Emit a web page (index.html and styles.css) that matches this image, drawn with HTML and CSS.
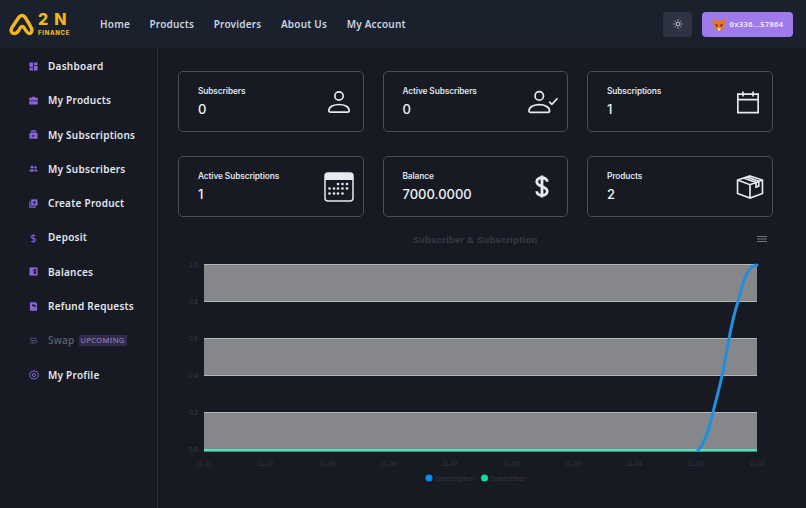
FILE: index.html
```html
<!DOCTYPE html>
<html lang="en">
<head>
<meta charset="utf-8">
<title>2N Finance Dashboard</title>
<link rel="stylesheet" href="styles.css">
</head>
<body>
<header class="topbar">
  <div class="brand">
    <svg class="brand-mark" viewBox="0 0 25 23" width="25" height="23"><path d="M13 2.500C11 2.500 10 4 9 5.500L3 14.500C1 17.500 2.500 20.500 5.500 20.500C8 20.500 9 18.500 10 17L11.500 14.500C12.500 13 14 13 15 14.500L16.500 17C17.500 18.500 18.500 20.500 20 20.500C22.500 20.500 23.500 18 22.500 15.500C21 12 19 9 17.500 6.500C16.500 4.500 15 2.500 13 2.500Z" fill="none" stroke="#f3b71b" stroke-width="3.400" stroke-linecap="round" stroke-linejoin="round"/></svg>
    <div class="brand-text"><span class="brand-name">2 N</span><span class="brand-sub">FINANCE</span></div>
  </div>
  <nav class="topnav">
    <a>Home</a><a>Products</a><a>Providers</a><a>About Us</a><a>My Account</a>
  </nav>
  <div class="actions">
    <button class="theme-btn" aria-label="Theme">
      <svg viewBox="0 0 12 12" width="10" height="10" fill="none" stroke="#e2e8f0" stroke-width="1"><circle cx="6" cy="6" r="2.300"/><path d="M6 .5V2M6 10v1.500M.5 6H2M10 6h1.500M2.100 2.100l1.100 1.100M8.800 8.800l1.100 1.100M2.100 9.900l1.100-1.100M8.800 3.200l1.100-1.100"/></svg>
    </button>
    <button class="wallet-btn">
      <svg viewBox="0 0 14 13" width="14" height="13"><path d="M0.500 0.500 L5 2.500 H9 L13.500 0.500 L13 6 L11 11 L8.500 12.500 H5.500 L3 11 L1 6Z" fill="#e2762b"/><path d="M3 6 L6 7 L5 9 Z M11 6 L8 7 L9 9 Z" fill="#3a2a20"/><path d="M5.500 10 H8.500 L8 12.500 H6Z" fill="#f0d6bd"/></svg>
      <span>0x336...57864</span>
    </button>
  </div>
</header>
<div class="shell">
  <aside class="sidebar">
    <a class="side-item"><svg class="side-icon" viewBox="0 0 10 10"><path d="M.5.5h4v5h-4zM5.500.5h4v3h-4zM5.500 4.500h4v5h-4zM.5 6.500h4v3h-4z"/></svg><span>Dashboard</span></a>
    <a class="side-item"><svg class="side-icon" viewBox="0 0 10 10"><path d="M3 2V.8h4V2h2.200a.6.6 0 0 1 .6.6V5H.2V2.600A.6.6 0 0 1 .8 2zM.2 5.800h9.600v3a.6.6 0 0 1-.6.6H.8a.6.6 0 0 1-.6-.6z"/></svg><span>My Products</span></a>
    <a class="side-item"><svg class="side-icon" viewBox="0 0 10 10"><path d="M2.500.3h5v1h-5zM1.500 1.800h7v1h-7zM.5 3.400h9v6.200h-9z"/><path d="M4 5v3l2.500-1.500z" fill="#171923"/></svg><span>My Subscriptions</span></a>
    <a class="side-item"><svg class="side-icon" viewBox="0 0 10 10"><circle cx="3.400" cy="3.500" r="1.600"/><circle cx="7.200" cy="3.800" r="1.300"/><path d="M.4 8.200c0-3 6-3 6 0zM7 8.200c0-1.200-.3-1.900-.8-2.400 1.600-.4 3.400.4 3.400 2.400z"/></svg><span>My Subscribers</span></a>
    <a class="side-item"><svg class="side-icon" viewBox="0 0 10 10"><path d="M2.400.4h7v7h-7z"/><path d="M.4 2.400h1.200v6h6v1.200H.4z"/><path d="M5.400 2h1v1.500h1.500v1H6.400v1.500h-1V4.500H3.900v-1h1.500z" fill="#171923"/></svg><span>Create Product</span></a>
    <a class="side-item"><span class="side-dollar">$</span><span>Deposit</span></a>
    <a class="side-item"><svg class="side-icon" viewBox="0 0 10 10"><path d="M.5.5h9v9h-9z"/><path d="M5 2.500h3v5H5zM6.200 4.200v1.600h.8V4.200z" fill="#171923"/></svg><span>Balances</span></a>
    <a class="side-item"><svg class="side-icon" viewBox="0 0 10 10"><path d="M1 .4h6.500L9 2v7.600H1z"/><path d="M3 3.500 5 2v1h1.500c1.500 0 1.500 3.500-.5 3.500 .8-.8.8-2-.5-2H5v1z" fill="#171923"/></svg><span>Refund Requests</span></a>
    <a class="side-item is-muted"><svg class="side-icon stroke" viewBox="0 0 10 10"><path d="M1 2.500h7.500M1 5h6.500a1.300 1.300 0 0 1 0 2.600H3M4 6.500 2.800 7.600 4 8.700M1 7.600h.8"/></svg><span>Swap</span><span class="tag">UPCOMING</span></a>
    <a class="side-item"><svg class="side-icon stroke gear" viewBox="0 0 10 10"><circle cx="5" cy="5" r="1.600"/><path d="M5 .6l1.100.8 1.400-.1.6 1.300 1.200.7-.3 1.700.3 1.700-1.200.7-.6 1.300-1.400-.1L5 9.400l-1.100-.8-1.400.1-.6-1.300-1.200-.7.3-1.700-.3-1.700 1.200-.7.6-1.300 1.400.1z"/></svg><span>My Profile</span></a>
  </aside>
  <main class="content">
    <section class="cards">
      <article class="card">
        <div><div class="card-label">Subscribers</div><div class="card-value">0</div></div>
        <svg class="card-icon" viewBox="0 0 26 26"><circle cx="13" cy="6.500" r="4.500"/><path d="M2 22.500c0-9 22-9 22 0 0 1-1 1.500-2 1.500H4c-1 0-2-.5-2-1.500z"/></svg>
      </article>
      <article class="card">
        <div><div class="card-label">Active Subscribers</div><div class="card-value">0</div></div>
        <svg class="card-icon wide" viewBox="0 0 32 26"><circle cx="12" cy="6.500" r="4.500"/><path d="M1 22.500c0-9 22-9 22 0 0 1-1 1.500-2 1.500H3c-1 0-2-.5-2-1.500z"/><path d="M22.500 12.500l3 3 6-6.500"/></svg>
      </article>
      <article class="card">
        <div><div class="card-label">Subscriptions</div><div class="card-value">1</div></div>
        <svg class="card-icon" viewBox="0 0 26 26"><path d="M2 4.500h22v20H2zM2 10.500h22M7.500 1.500v5.500M18.500 1.500v5.500"/></svg>
      </article>
      <article class="card">
        <div><div class="card-label">Active Subscriptions</div><div class="card-value">1</div></div>
        <svg class="card-icon large" viewBox="0 0 30 30"><rect x="1" y="1" width="28" height="28" rx="3"/><path class="fill" d="M1 4a3 3 0 0 1 3-3h22a3 3 0 0 1 3 3v4H1z"/><g class="fill"><circle cx="14" cy="12" r="1.300"/><circle cx="18.500" cy="12" r="1.300"/><circle cx="23" cy="12" r="1.300"/><circle cx="5.500" cy="16.500" r="1.300"/><circle cx="10" cy="16.500" r="1.300"/><circle cx="14" cy="16.500" r="1.300"/><circle cx="18.500" cy="16.500" r="1.300"/><circle cx="23" cy="16.500" r="1.300"/><circle cx="5.500" cy="21.500" r="1.300"/><circle cx="10" cy="21.500" r="1.300"/><circle cx="14" cy="21.500" r="1.300"/><circle cx="18.500" cy="21.500" r="1.300"/></g></svg>
      </article>
      <article class="card">
        <div><div class="card-label">Balance</div><div class="card-value">7000.0000</div></div>
        <svg class="card-icon dollar" viewBox="0 0 16 26"><path d="M14 7.500c0-6-12-6-12 0 0 6.500 12 4.500 12 11 0 6-12 6-12 0M8 .5v25"/></svg>
      </article>
      <article class="card">
        <div><div class="card-label">Products</div><div class="card-value">2</div></div>
        <svg class="card-icon box" viewBox="0 0 30 26"><path d="M15 1 L28.500 5.500V20L15 25 1.500 20V5.500zM1.500 5.500 15 10.500 28.500 5.500M15 10.500V25M8 3.200 21.500 8v5l3-1V6.800L11.500 2"/></svg>
      </article>
    </section>
    <section class="chart">
      <svg class="chart-svg" viewBox="0 0 595 270" width="595" height="270">
        <text class="chart-title" x="297" y="21.500" text-anchor="middle">Subscriber &amp; Subscription</text>
        <path class="menu" d="M579 15.500h10M579 18h10M579 20.500h10"/>
        <g class="bands">
          <rect x="26" y="43.500" width="553" height="37"/>
          <rect x="26" y="117.500" width="553" height="37"/>
          <rect x="26" y="191.500" width="553" height="37"/>
        </g>
        <g class="ylabels">
          <text x="20" y="46">1.0</text><text x="20" y="83">0.8</text><text x="20" y="120">0.6</text><text x="20" y="157">0.4</text><text x="20" y="194">0.2</text><text x="20" y="231">0.0</text>
        </g>
        <g class="xlabels">
          <text x="26" y="245">11-11</text><text x="87.400" y="245">11-10</text><text x="148.900" y="245">11-09</text><text x="210.300" y="245">11-08</text><text x="271.800" y="245">11-07</text><text x="333.200" y="245">11-06</text><text x="394.700" y="245">11-05</text><text x="456.100" y="245">11-04</text><text x="517.600" y="245">11-03</text><text x="579" y="245">11-02</text>
        </g>
        <path class="line-green" d="M26 229.500H579"/>
        <path class="line-green-core" d="M26 229H579"/>
        <path class="line-blue" d="M520 229C528 222 532 203 535 191.500C539 175 542 165 544 154.500C547 140 549 128 551 117.500C554 102 557 90 560 80.500C565 60 570 44 579 44"/>
        <circle cx="251" cy="257" r="3.500" fill="#008ffb"/><text class="legend" x="257" y="260">Subscription</text>
        <circle cx="306.500" cy="257" r="3.500" fill="#00e396"/><text class="legend" x="312.500" y="260">Subscriber</text>
      </svg>
    </section>
  </main>
</div>
</body>
</html>
```

FILE: styles.css
```css
* { box-sizing: border-box; }
html, body { margin: 0; padding: 0; height: 100%; }
body {
  width: 806px; height: 508px; overflow: hidden;
  background: #171923; color: #e2e8f0;
  font-family: "Noto Sans", "Open Sans", sans-serif;
  display: flex; flex-direction: column;
}
.topbar {
  height: 48px; flex: none; background: #1a202c;
  display: flex; align-items: center; padding: 0 13px 0 9px;
}
.brand { display: flex; align-items: center; gap: 4px; width: 91px; }
.brand-mark { flex: none; margin-top: 1px; }
.brand-text { display: flex; flex-direction: column; margin-bottom: 3px; color: #f3b71b; font-family: "Inter", sans-serif; font-weight: 800; }
.brand-name { font-size: 16px; line-height: 20px; letter-spacing: 1.300px; }
.brand-sub { font-size: 6px; line-height: 8px; letter-spacing: .7px; }
.topnav { display: flex; gap: 19.500px; flex: 1; font-size: 10px; font-weight: 600; letter-spacing: .2px; color: #cbd5e0; }
.actions { display: flex; align-items: center; gap: 10px; }
button { border: 0; padding: 0; font: inherit; }
.theme-btn {
  width: 29px; height: 25px; border-radius: 4px; background: #2d3340;
  display: flex; align-items: center; justify-content: center;
}
.wallet-btn {
  width: 91px; height: 25px; border-radius: 4px; background: #9f7aea; color: #e9e4fa;
  display: flex; align-items: center; justify-content: center; gap: 4px;
  font-size: 7.500px; font-weight: 700; letter-spacing: .35px;
}
.shell { flex: 1; display: flex; min-height: 0; }
.sidebar {
  width: 158px; flex: none; border-right: 1px solid #2a2e39;
  padding: 6px 0 0 29px; display: flex; flex-direction: column; gap: 10.300px;
}
.side-item {
  height: 24px; display: flex; align-items: center; gap: 10px;
  font-size: 10px; font-weight: 600; letter-spacing: .25px; color: #e2e8f0;
}
.side-icon { width: 9px; height: 9px; flex: none; fill: #8b66d8; }
.side-icon.stroke { fill: none; stroke: #8b66d8; stroke-width: 1; }
.side-icon.gear { width: 10px; height: 10px; margin-right: -1px; }
.side-dollar { width: 9px; text-align: center; color: #8b66d8; font-size: 11px; font-weight: 400; letter-spacing: 0; }
.is-muted { color: #5f6473; font-weight: 500; }
.is-muted .side-icon.stroke { stroke: #5c4f86; }
.tag {
  margin-left: -6px; padding: 0 2px; background: #322a4a; color: #9d8fc8;
  font-size: 7.500px; font-weight: 400; line-height: 11px; letter-spacing: .4px; border-radius: 1px;
}
.content { flex: 1; padding: 23px 33px 0 20px; min-width: 0; }
.cards { display: grid; grid-template-columns: repeat(3, 185.500px); gap: 24px 19px; }
.card {
  height: 61px; border: 1px solid #4a4e59; border-radius: 5px;
  padding: 0 9px 0 19px; display: flex; align-items: center; justify-content: space-between;
  background: #171923; font-family: "Inter", sans-serif;
}
.card-label { font-size: 8.300px; font-weight: 600; line-height: 12px; color: #dfe3ea; letter-spacing: -.1px; }
.card-value { font-size: 13px; font-weight: 500; line-height: 20px; color: #f0f2f5; margin-top: 2px; }
.card-icon { width: 24px; height: 24px; margin-right: 3px; fill: none; stroke: #e8eaee; stroke-width: 1.800; flex: none; }
.card-icon.wide { width: 30px; height: 26px; margin-right: 0; }
.card-icon.box { width: 28px; height: 24px; margin-right: -1px; }
.card-icon.large { width: 30px; height: 30px; margin-right: 0; stroke-width: 1.500; }
.card-icon.dollar { width: 14px; height: 27px; margin-right: 9px; stroke-width: 3.200; }
.card-icon .fill, .card-icon.large g { fill: #e8eaee; stroke: none; }
.chart { margin-top: 4px; }
.chart-svg { display: block; }
.chart-title { font-family: "Liberation Sans", sans-serif; font-size: 9.500px; font-weight: 700; fill: #373b46; letter-spacing: .2px; }
.menu { stroke: #70747e; stroke-width: 1; fill: none; }
.bands rect { fill: #86878b; stroke: #b4b5b8; stroke-width: 1; stroke-dasharray: 553 37; }
.ylabels text { font-family: "Liberation Sans", sans-serif; font-size: 6.500px; fill: #3b3e48; text-anchor: end; }
.xlabels text { font-family: "Liberation Sans", sans-serif; font-size: 6.500px; fill: #343741; text-anchor: middle; }
.line-green { stroke: #22c9a0; stroke-width: 2.400; fill: none; }
.line-green-core { stroke: #8ce8d2; stroke-width: 1; fill: none; }
.line-blue { stroke: #1f8fe0; stroke-width: 3; fill: none; stroke-linecap: round; }
.legend { font-family: "Liberation Sans", sans-serif; font-size: 7.300px; fill: #34373f; }
```
